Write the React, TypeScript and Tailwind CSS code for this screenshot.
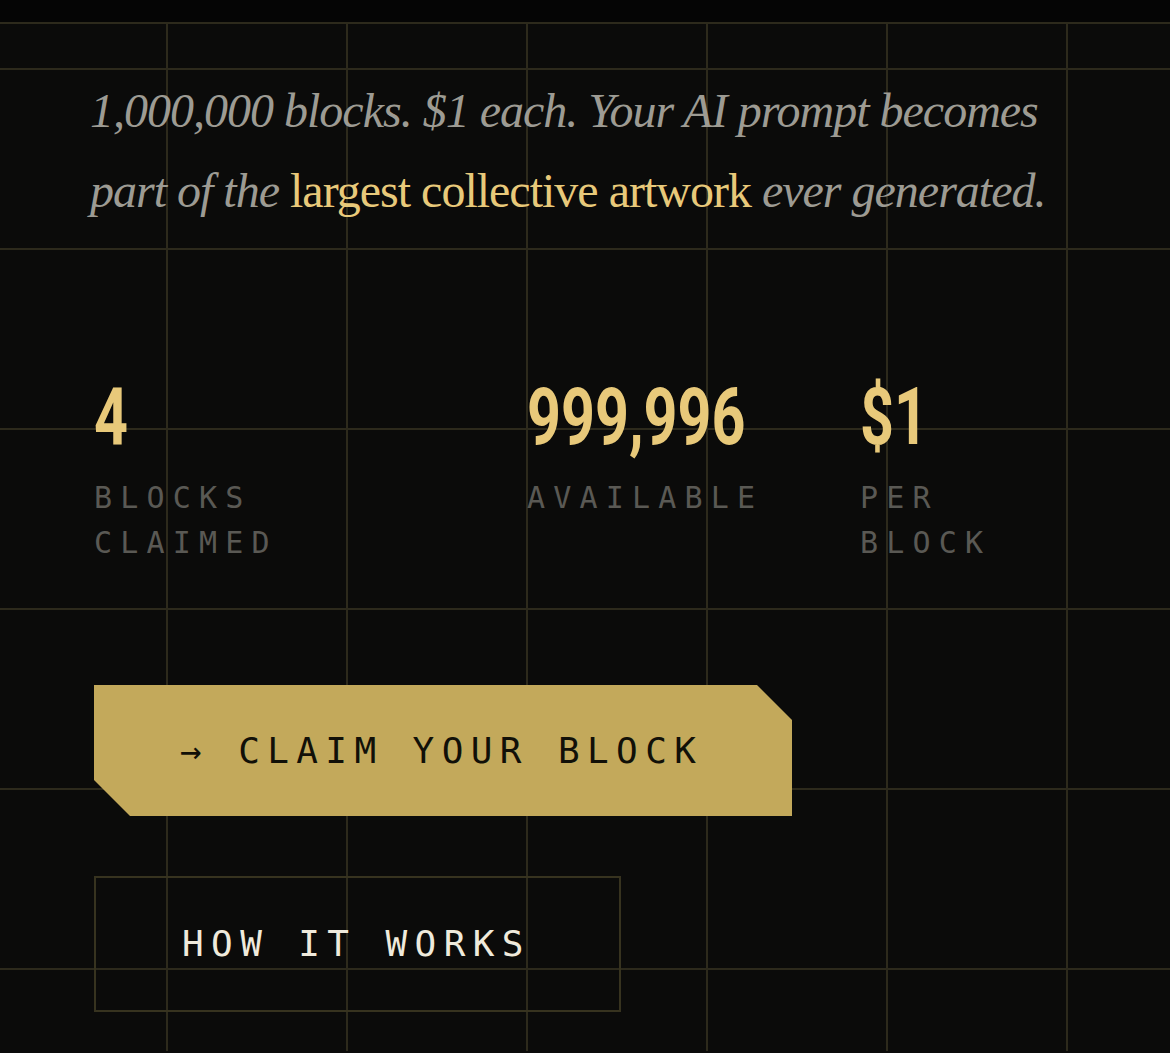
import React from 'react';

const stats = [
  { value: '4', label: ['BLOCKS', 'CLAIMED'] },
  { value: '999,996', label: ['AVAILABLE'] },
  { value: '$1', label: ['PER', 'BLOCK'] },
];

export default function App() {
  return (
    <div className="min-h-[1053px] bg-[#0b0b0a] overflow-hidden">
      {/* header edge */}
      <div className="h-[24px] bg-[#050505] border-b-2 border-[#2d2a1c]" />

      <main className="min-h-[1027px] pl-[94px] pt-[47px] bg-[linear-gradient(to_right,#2d2a1c_2px,transparent_2px),linear-gradient(to_bottom,#2d2a1c_2px,transparent_2px)] bg-[size:180px_180px] bg-[position:166px_44px]">
        <p className="-ml-1 whitespace-nowrap font-['Liberation_Serif',serif] text-[48px] leading-[80px] tracking-[-1px] text-[#9d9b93] italic">
          1,000,000 blocks. $1 each. Your AI prompt becomes
          <br />
          part of the <span className="not-italic text-[#e8c97a]">largest collective artwork</span> ever generated.
        </p>

        <div className="mt-[146px] grid grid-cols-[433px_333px_auto]">
          {stats.map((s) => (
            <div key={s.value}>
              <div className="h-[80px] font-['Roboto',sans-serif] text-[80px] font-bold leading-none text-[#e8c97a]">
                <span className="inline-block origin-left scale-x-[0.74]">{s.value}</span>
              </div>
              <div className="mt-[18px] font-['DejaVu_Sans_Mono',monospace] text-[30px] leading-[45px] tracking-[8.2px] text-[#5a5954]">
                {s.label.map((l) => (
                  <div key={l}>{l}</div>
                ))}
              </div>
            </div>
          ))}
        </div>

        <button className="mt-[120px] flex h-[131px] w-[698px] items-center bg-[#c3a95b] pl-[86px] font-['DejaVu_Sans_Mono',monospace] text-[36px] tracking-[7.4px] text-[#111008] [clip-path:polygon(0_0,calc(100%_-_35px)_0,100%_35px,100%_100%,36px_100%,0_calc(100%_-_36px))]">
          → CLAIM YOUR BLOCK
        </button>

        <button className="mt-[60px] flex h-[136px] w-[527px] items-center border-2 border-[#37331f] pl-[86px] font-['DejaVu_Sans_Mono',monospace] text-[36px] tracking-[7.4px] text-[#efeadc]">
          HOW IT WORKS
        </button>
      </main>
    </div>
  );
}
